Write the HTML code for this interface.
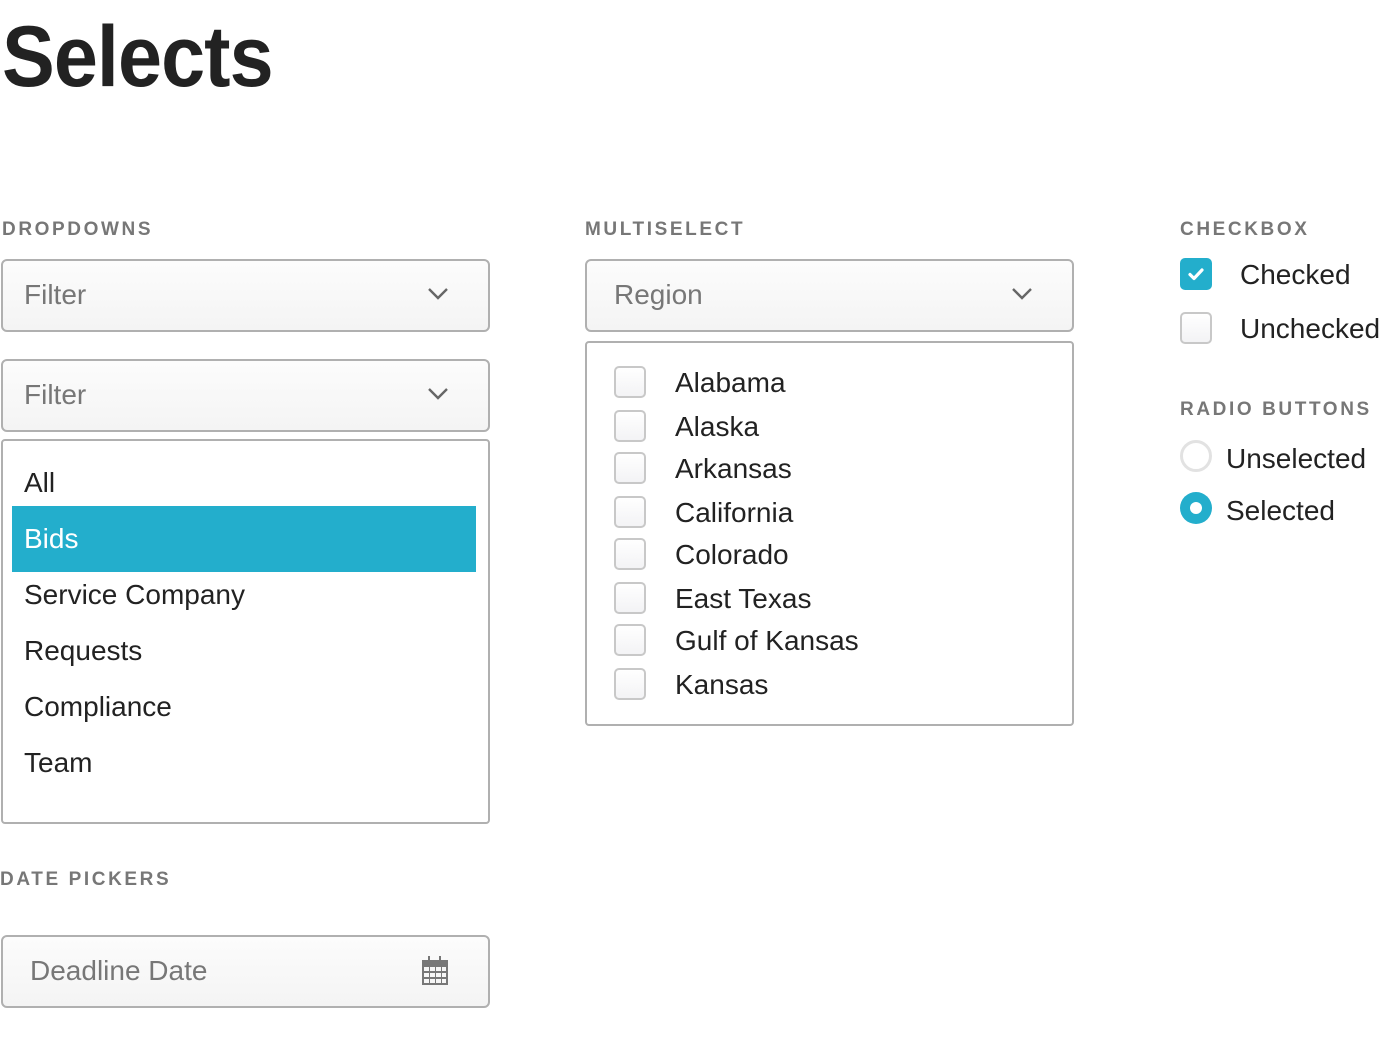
<!DOCTYPE html>
<html><head><meta charset="utf-8"><style>
*{margin:0;padding:0;box-sizing:border-box}
body{width:1400px;height:1054px;background:#fff;font-family:"Liberation Sans",sans-serif;color:#222;position:relative;overflow:hidden}
.a{position:absolute}
h1{position:absolute;left:2px;top:7px;font-size:86px;font-weight:bold;color:#222;transform:scaleX(.92);transform-origin:left;letter-spacing:-1px;line-height:100px}
.lbl{position:absolute;font-size:19px;font-weight:bold;color:#777;letter-spacing:2.6px;line-height:24px}
.box{position:absolute;border:2px solid #b0b0b0;border-radius:6px;background:linear-gradient(#fcfcfc,#f4f4f4)}
.list{position:absolute;border:2px solid #b0b0b0;border-radius:4px;background:#fff}
.t{position:absolute;font-size:28px;line-height:34px;white-space:nowrap;margin-top:1px}
.ph{color:#777}
.cb{position:absolute;width:32px;height:32px;border:2px solid #c8c8c8;border-radius:5px;background:linear-gradient(#fff,#f3f3f5)}
</style></head><body>
<h1>Selects</h1>

<div class="lbl" style="left:2px;top:218px">DROPDOWNS</div>
<div class="box" style="left:1px;top:259px;width:489px;height:73px"></div>
<div class="t ph" style="left:24px;top:277px">Filter</div>
<svg class="a" style="left:427px;top:287px" width="22" height="14"><path d="M2 2 L11 11 L20 2" stroke="#666" stroke-width="2.4" fill="none"/></svg>
<div class="box" style="left:1px;top:359px;width:489px;height:73px"></div>
<div class="t ph" style="left:24px;top:377px">Filter</div>
<svg class="a" style="left:427px;top:387px" width="22" height="14"><path d="M2 2 L11 11 L20 2" stroke="#666" stroke-width="2.4" fill="none"/></svg>
<div class="list" style="left:1px;top:439px;width:489px;height:385px"></div>
<div class="a" style="left:12px;top:506px;width:464px;height:66px;background:#23aecc"></div>
<div class="t" style="left:24px;top:465px">All</div>
<div class="t" style="left:24px;top:521px;color:#fff">Bids</div>
<div class="t" style="left:24px;top:577px">Service Company</div>
<div class="t" style="left:24px;top:633px">Requests</div>
<div class="t" style="left:24px;top:689px">Compliance</div>
<div class="t" style="left:24px;top:745px">Team</div>

<div class="lbl" style="left:0px;top:868px">DATE PICKERS</div>
<div class="box" style="left:1px;top:935px;width:489px;height:73px"></div>
<div class="t ph" style="left:30px;top:953px">Deadline Date</div>
<svg class="a" style="left:421px;top:956px" width="28" height="30"><rect x="1" y="4" width="26" height="25" fill="#777"/><g fill="#f6f6f6"><rect x="3" y="11" width="5" height="4"/><rect x="9" y="11" width="5" height="4"/><rect x="15" y="11" width="5" height="4"/><rect x="21" y="11" width="4" height="4"/><rect x="3" y="17" width="5" height="4"/><rect x="9" y="17" width="5" height="4"/><rect x="15" y="17" width="5" height="4"/><rect x="21" y="17" width="4" height="4"/><rect x="3" y="23" width="5" height="4"/><rect x="9" y="23" width="5" height="4"/><rect x="15" y="23" width="5" height="4"/><rect x="21" y="23" width="4" height="4"/></g><path d="M8 0v8M19 0v8" stroke="#777" stroke-width="2"/></svg>

<div class="lbl" style="left:585px;top:218px">MULTISELECT</div>
<div class="box" style="left:585px;top:259px;width:489px;height:73px"></div>
<div class="t ph" style="left:614px;top:277px">Region</div>
<svg class="a" style="left:1011px;top:287px" width="22" height="14"><path d="M2 2 L11 11 L20 2" stroke="#666" stroke-width="2.4" fill="none"/></svg>
<div class="list" style="left:585px;top:341px;width:489px;height:385px"></div>
<div class="cb" style="left:614px;top:366px"></div><div class="t" style="left:675px;top:365px">Alabama</div>
<div class="cb" style="left:614px;top:410px"></div><div class="t" style="left:675px;top:409px">Alaska</div>
<div class="cb" style="left:614px;top:452px"></div><div class="t" style="left:675px;top:451px">Arkansas</div>
<div class="cb" style="left:614px;top:496px"></div><div class="t" style="left:675px;top:495px">California</div>
<div class="cb" style="left:614px;top:538px"></div><div class="t" style="left:675px;top:537px">Colorado</div>
<div class="cb" style="left:614px;top:582px"></div><div class="t" style="left:675px;top:581px">East Texas</div>
<div class="cb" style="left:614px;top:624px"></div><div class="t" style="left:675px;top:623px">Gulf of Kansas</div>
<div class="cb" style="left:614px;top:668px"></div><div class="t" style="left:675px;top:667px">Kansas</div>

<div class="lbl" style="left:1180px;top:218px">CHECKBOX</div>
<div class="a" style="left:1180px;top:258px;width:32px;height:32px;border-radius:5px;background:#23aecc"></div>
<svg class="a" style="left:1180px;top:258px" width="32" height="32"><path d="M10 16.5 L14 20.5 L22 12" stroke="#fff" stroke-width="3.2" fill="none" stroke-linecap="round" stroke-linejoin="round"/></svg>
<div class="t" style="left:1240px;top:257px">Checked</div>
<div class="cb" style="left:1180px;top:312px"></div>
<div class="t" style="left:1240px;top:311px">Unchecked</div>

<div class="lbl" style="left:1180px;top:398px">RADIO BUTTONS</div>
<div class="a" style="left:1180px;top:440px;width:32px;height:32px;border-radius:50%;border:3px solid #e2e2e2"></div>
<div class="t" style="left:1226px;top:441px">Unselected</div>
<div class="a" style="left:1180px;top:492px;width:32px;height:32px;border-radius:50%;background:#23aecc"></div>
<div class="a" style="left:1190px;top:502px;width:12px;height:12px;border-radius:50%;background:#fff"></div>
<div class="t" style="left:1226px;top:493px">Selected</div>
</body></html>
